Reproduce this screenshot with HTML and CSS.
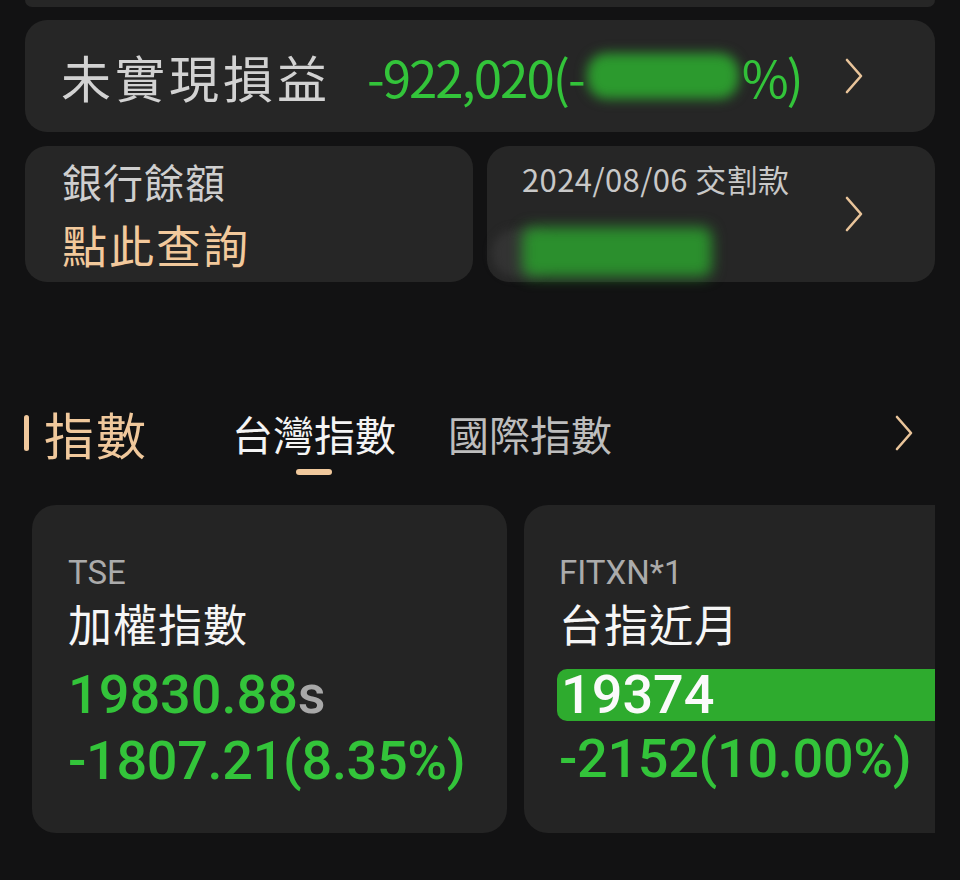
FILE: index.html
```html
<!DOCTYPE html>
<html lang="zh-Hant">
<head>
<meta charset="utf-8">
<link rel="stylesheet" href="styles.css">
</head>
<body>
<div class="stub"></div>

<div class="card pnl">
  <span class="pnl-label">未實現損益</span>
  <span class="pnl-value">-922,020(-<span class="blob blob-pnl"></span>%)</span>
  <svg class="chev chev-pnl" viewBox="0 0 20 36"><polyline points="3,2 17,18 3,34"/></svg>
</div>

<div class="pair">
  <div class="card bank">
    <div class="bank-label">銀行餘額</div>
    <div class="bank-link">點此查詢</div>
  </div>
  <div class="card settle">
    <div class="settle-main">
      <div class="settle-label">2024/08/06 交割款</div>
      <div class="settle-value"><span class="smudge"></span><span class="blob blob-settle"></span></div>
    </div>
    <svg class="chev" viewBox="0 0 20 36"><polyline points="3,2 17,18 3,34"/></svg>
  </div>
</div>

<div class="section">
  <div class="section-title"><span class="bar"></span>指數</div>
  <div class="tabs">
    <div class="tab active">台灣指數<span class="underline"></span></div>
    <div class="tab">國際指數</div>
  </div>
  <svg class="chev chev-section" viewBox="0 0 20 36"><polyline points="3,2 17,18 3,34"/></svg>
</div>

<div class="quotes">
  <div class="quote">
    <div class="code">TSE</div>
    <div class="name">加權指數</div>
    <div class="price">19830.88<span class="suffix">s</span></div>
    <div class="change">-1807.21(8.35%)</div>
  </div>
  <div class="quote quote-b">
    <div class="code">FITXN*1</div>
    <div class="name">台指近月</div>
    <div class="price hl">19374</div>
    <div class="change">-2152(10.00%)</div>
  </div>
</div>
</body>
</html>
```

FILE: styles.css
```css
html, body {
  margin: 0;
  padding: 0;
}
body {
  width: 960px;
  height: 880px;
  background: #121213;
  font-family: "Noto Sans CJK TC", "Noto Sans", sans-serif;
  overflow: hidden;
}
.stub {
  height: 7px;
  margin: 0 25px;
  background: #262626;
  border-radius: 0 0 20px 20px;
}
.card {
  background: #262626;
  border-radius: 22px;
}
.pnl {
  margin: 13px 25px 0;
  height: 112px;
  display: flex;
  align-items: center;
  padding: 0 0 0 36px;
  box-sizing: border-box;
}
.pnl-label {
  font-size: 50px;
  color: #d2d2d2;
  letter-spacing: 4px;
  line-height: 1;
}
.pnl-value {
  margin-left: 36px;
  font-size: 51px;
  color: #33c43a;
  letter-spacing: -2px;
  line-height: 1;
  display: flex;
  align-items: center;
}
.blob {
  display: inline-block;
  background: #2c9a2e;
  filter: blur(6px);
  border-radius: 20px;
}
.blob-pnl {
  width: 152px;
  height: 46px;
  margin: 0 3px 0 3px;
}
.chev {
  width: 20px;
  height: 36px;
  fill: none;
  stroke: #e9c49a;
  stroke-width: 2.6;
  stroke-linecap: round;
  stroke-linejoin: round;
  flex-shrink: 0;
}
.chev-pnl {
  margin-left: auto;
  margin-right: 71px;
}
.pair {
  display: flex;
  gap: 14px;
  margin: 14px 25px 0;
}
.pair .card {
  width: 448px;
  flex: 0 0 448px;
  min-width: 0;
  height: 136px;
  box-sizing: border-box;
}
.bank {
  padding: 11px 0 0 37px;
}
.bank-label {
  font-size: 40px;
  color: #cfcfcf;
  line-height: 48px;
  letter-spacing: 1px;
}
.bank-link {
  margin-top: 12px;
  font-size: 45px;
  color: #f2c99c;
  line-height: 56px;
  letter-spacing: 2px;
}
.settle {
  display: flex;
  align-items: center;
  padding: 0 71px 0 35px;
}
.settle-main {
  flex: 1;
  align-self: flex-start;
  padding-top: 13px;
}
.settle-label {
  font-size: 31px;
  color: #c8c8c8;
  line-height: 40px;
  letter-spacing: 0.4px;
  white-space: nowrap;
}
.settle-value {
  margin-top: 28px;
  height: 50px;
  position: relative;
  display: flex;
  align-items: center;
}
.smudge {
  position: absolute;
  left: -30px;
  top: 2px;
  width: 60px;
  height: 48px;
  background: #333;
  border-radius: 24px;
  filter: blur(4px);
}
.blob-settle {
  position: relative;
  width: 190px;
  height: 50px;
  background: #2b8f2d;
  filter: blur(7px);
  border-radius: 10px;
}
.section {
  display: flex;
  align-items: center;
  margin: 121px 0 0 24px;
  height: 60px;
}
.section-title {
  display: flex;
  align-items: center;
  font-size: 50px;
  color: #f0c89c;
  line-height: 1;
  letter-spacing: 2px;
}
.bar {
  width: 5px;
  height: 36px;
  border-radius: 3px;
  background: #f0c89c;
  margin-right: 15px;
}
.tabs {
  display: flex;
  gap: 52px;
  margin-left: 84px;
}
.tab {
  position: relative;
  font-size: 41px;
  color: #bdbdbd;
  line-height: 1;
}
.tab.active {
  color: #f4f4f4;
}
.underline {
  position: absolute;
  left: 64px;
  top: 56px;
  width: 36px;
  height: 6px;
  border-radius: 3px;
  background: #f0c89c;
}
.chev-section {
  margin-left: auto;
  margin-right: 46px;
}
.quotes {
  display: flex;
  gap: 17px;
  margin: 42px 25px 0 32px;
  overflow: hidden;
}
.quote {
  flex-shrink: 0;
  width: 475px;
  height: 328px;
  background: #242424;
  border-radius: 24px;
  box-sizing: border-box;
  padding: 48px 0 0 36px;
  font-family: Roboto, "Noto Sans CJK TC", sans-serif;
}
.quote-b {
  width: 460px;
  padding-left: 35px;
}
.code {
  font-size: 33px;
  color: #ababab;
  line-height: 40px;
}
.name {
  font-family: "Noto Sans CJK TC", sans-serif;
  font-size: 44px;
  color: #f6f6f6;
  line-height: 50px;
  margin-top: 5px;
  letter-spacing: 1px;
}
.price {
  font-size: 54px;
  font-weight: 500;
  color: #33c43a;
  line-height: 56px;
  margin-top: 19px;
}
.suffix {
  color: #a8a8a8;
}
.price.hl {
  background: #2eab2e;
  color: #fafafa;
  border-radius: 10px 0 0 10px;
  margin-left: -2px;
  padding-left: 4px;
  line-height: 52px;
  margin-top: 21px;
  margin-bottom: 2px;
}
.change {
  font-size: 54px;
  font-weight: 500;
  color: #33c43a;
  line-height: 60px;
  margin-top: 8px;
  letter-spacing: -0.3px;
}
```
